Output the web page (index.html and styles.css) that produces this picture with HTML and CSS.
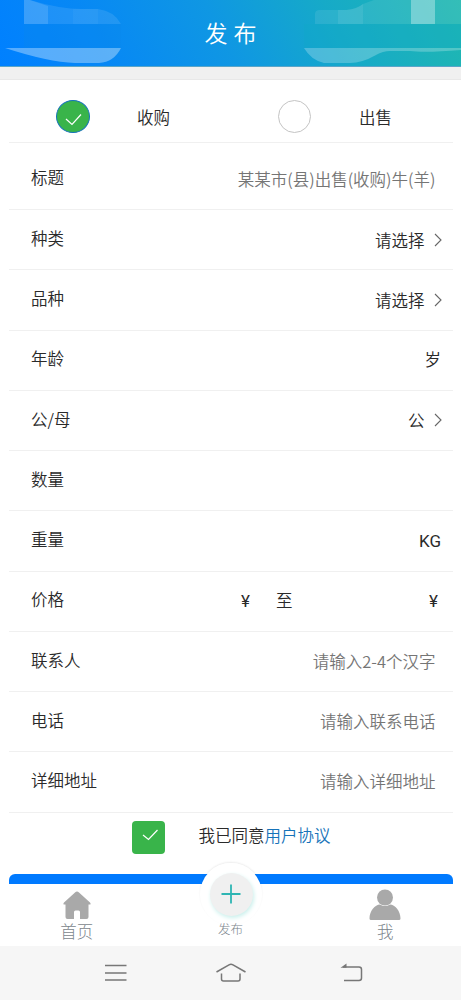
FILE: index.html
```
<!DOCTYPE html>
<html lang="zh-CN">
<head>
<meta charset="utf-8">
<title>发布</title>
<link rel="stylesheet" href="styles.css">
</head>
<body>
<div class="app">
  <header class="header">
    <svg class="header-art" viewBox="0 0 461 67" width="461" height="67" aria-hidden="true">
      <path d="M24 0H30Q60 9 82 9H98Q114 11 121 24H24Z" fill="#fff" opacity=".1"/>
      <path d="M24 0H30L48 6V24H24Z" fill="#fff" opacity=".13"/>
      <path d="M73 9H98V24H73Z" fill="#fff" opacity=".04"/>
      <path d="M5 48H121Q114 62 99 63H75Q48 62 5 48Z" fill="#fff" opacity=".34"/>
      <path d="M24 24H121V48H24Z" fill="#0a88ea" opacity=".3"/>
      <path d="M315 24V14Q315 10 320 10H346Q357 9 363 4L374 0H461V24Z" fill="#fff" opacity=".09"/>
      <path d="M338 10H346Q357 9 363 4V24H338Z" fill="#fff" opacity=".08"/>
      <path d="M411 0H435V24H411Z" fill="#fff" opacity=".33"/>
      <path d="M304 24H461V48H304Z" fill="#10a8c8" opacity=".3"/>
      <path d="M304 48H461V50Q425 53 410 51H390Q383 51 376 55Q362 63 350 63H324Q311 60 304 48Z" fill="#fff" opacity=".24"/>
    </svg>
    <h1 class="title">发<span class="title-end">布</span></h1>
  </header>
  <div class="band"></div>
  <main class="form">
    <div class="types">
      <label class="type"><span class="radio radio-on"><svg viewBox="0 0 34 34" width="34" height="34"><path d="M10 19L16 24.500L25 14.500" class="tick"/></svg></span><span>收购</span></label>
      <label class="type"><span class="radio"></span><span>出售</span></label>
    </div>
    <div class="row row-first"><span class="label">标题</span><span class="value hint">某某市(县)出售(收购)牛(羊)</span></div>
    <div class="row"><span class="label">种类</span><span class="value pick">请选择<svg class="chevron" viewBox="0 0 8 14" width="8" height="14"><path d="M1 1L7 7L1 13"/></svg></span></div>
    <div class="row"><span class="label">品种</span><span class="value pick">请选择<svg class="chevron" viewBox="0 0 8 14" width="8" height="14"><path d="M1 1L7 7L1 13"/></svg></span></div>
    <div class="row"><span class="label">年龄</span><span class="value age">岁</span></div>
    <div class="row"><span class="label">公/母</span><span class="value pick">公<svg class="chevron" viewBox="0 0 8 14" width="8" height="14"><path d="M1 1L7 7L1 13"/></svg></span></div>
    <div class="row"><span class="label">数量</span></div>
    <div class="row"><span class="label">重量</span><span class="value unit">KG</span></div>
    <div class="row"><span class="label">价格</span><span class="value price"><span class="yen">¥</span><span class="to">至</span><span class="yen">¥</span></span></div>
    <div class="row"><span class="label">联系人</span><span class="value hint">请输入2-4个汉字</span></div>
    <div class="row"><span class="label">电话</span><span class="value hint">请输入联系电话</span></div>
    <div class="row"><span class="label">详细地址</span><span class="value hint">请输入详细地址</span></div>
    <div class="agree">
      <span class="checkbox"><svg viewBox="0 0 34 34" width="34" height="34"><path d="M11 14L16.500 18.500L25.500 9" class="tick"/></svg></span>
      <span>我已同意<a class="link">用户协议</a></span>
    </div>
    <div class="submit"></div>
  </main>
  <nav class="tabs">
    <div class="tab">
      <svg class="tab-icon" viewBox="0 0 32 32" width="32" height="32"><path d="M16 2.500Q17 2.500 18 3.500L29 13.500Q30.500 15.500 28.500 15.500H27.500V28Q27.500 30 25.500 30H19V23Q19 21.500 17.500 21.500H14.500Q13 21.500 13 23V30H6.500Q4.500 30 4.500 28V15.500H3.500Q1.500 15.500 3 13.500L14 3.500Q15 2.500 16 2.500Z"/></svg>
      <span>首页</span>
    </div>
    <div class="tab tab-main">
      <span class="halo"><span class="plus"><svg viewBox="0 0 20 20" width="20" height="20"><path d="M10 .5V19.500M.5 10H19.500"/></svg></span></span>
      <span class="publish">发布</span>
    </div>
    <div class="tab">
      <svg class="tab-icon tab-icon-me" viewBox="0 0 32 32" width="32" height="32"><circle cx="16" cy="8.500" r="8"/><path d="M.5 29.500C.5 22 6 15.500 11 15.500Q16 18.500 21 15.500C26 15.500 31.500 22 31.500 29.500Q31.500 31 30 31H2Q.5 31 .5 29.500Z"/></svg>
      <span class="me">我</span>
    </div>
  </nav>
  <footer class="system">
    <svg viewBox="0 0 22 18" width="22" height="18"><path d="M0 2.500H21.500M0 10H21.500M0 17H21.500"/></svg>
    <svg viewBox="0 0 30 20" width="30" height="20"><path d="M.5 9L13 1.800Q15 .6 17 1.800L29.500 9M5.500 10.500V16Q5.500 18 7.500 18H22Q24 18 24 16V10.500"/></svg>
    <svg viewBox="0 0 23 19" width="23" height="19"><path d="M3 4H19Q21.500 4 21.500 6.500V15Q21.500 17.500 19 17.500H4"/><path class="arrow" d="M.5 4.700L6.500 .5V4.700Z"/></svg>
  </footer>
</div>
</body>
</html>
```

FILE: styles.css
```
* { box-sizing: border-box; }

body {
  margin: 0;
  background: #fff;
  color: #2a2a2a;
  font: 350 16.5px/24px "Noto Sans CJK SC", sans-serif;
}

.app {
  display: flex;
  flex-direction: column;
  width: 461px;
  height: 1000px;
  overflow: hidden;
}

svg { display: block; flex: none; }

.header {
  position: relative;
  flex: none;
  height: 67px;
  display: flex;
  justify-content: center;
  background: linear-gradient(62deg, #0080ff 0%, #0788f5 22%, #0f97e3 48%, #16aac8 72%, #20b8b0 100%);
  border-bottom: 1px solid #5aa5c8;
}

.header-art { position: absolute; top: 0; left: 0; }

.title {
  position: relative;
  margin: 0;
  padding-top: 15px;
  color: #fff;
  font-size: 23px;
  font-weight: 350;
  line-height: 34px;
}

.title-end { margin-left: 6px; }

.band {
  flex: none;
  height: 13px;
  background: #f0f0f0;
  border-bottom: 1px solid #e8e8e8;
}

.form {
  flex: none;
  height: 804px;
  padding: 0 8px 0 9px;
}

.types {
  display: flex;
  height: 63px;
  padding: 20px 0 0 47px;
  border-bottom: 1.5px solid #f0f0f0;
}

.type {
  display: flex;
  width: 222px;
  gap: 47px;
  line-height: 34px;
}

.type:last-child { width: 150px; gap: 48px; }

.radio {
  width: 33px;
  height: 33px;
  border: 1px solid #c4c4c4;
  border-radius: 50%;
}

.radio-on {
  width: 34px;
  height: 33px;
  background: #39b44a;
  border: 1.5px solid #1673b9;
}

.radio-on svg { margin: -1.5px -1px; }

.tick { fill: none; stroke: #fff; stroke-width: 1.2; }

.row {
  display: flex;
  justify-content: space-between;
  height: 60.25px;
  padding: 16px 13px 0 22px;
  border-bottom: 1.5px solid #f0f0f0;
}

.label { margin-top: -.25px; }
.row-first { height: 67px; padding-top: 22.5px; }

.value { padding-top: 1px; }
.hint { padding-right: 4.5px; color: #757575; }
.age { padding-top: .5px; margin-right: -1px; }
.pick { display: flex; gap: 9.5px; padding-top: 1.5px; margin-right: -2px; }
.chevron { margin-top: 5px; fill: none; stroke: #666; stroke-width: 1.1; }
.unit { padding-top: 2px; margin-right: -1px; font-family: Roboto, sans-serif; font-size: 17px; font-weight: 400; }
.price { display: flex; width: 200px; padding-top: 0; margin-right: -1px; }
.yen { width: 12px; font-family: Roboto, sans-serif; font-size: 17px; font-weight: 400; padding-top: 1px; }
.to { flex: 1; padding-left: 23px; }

.agree {
  display: flex;
  gap: 33.5px;
  padding: 8px 0 0 123px;
  height: 61px;
  line-height: 29px;
}

.checkbox {
  width: 33px;
  height: 33px;
  background: #39b44a;
  border-radius: 4px;
}

.link { color: #1673b9; }

.submit {
  height: 44px;
  border-radius: 6px;
  background: #007aff;
}

.tabs {
  position: relative;
  flex: none;
  display: flex;
  justify-content: space-between;
  height: 62px;
  background: #fff;
}

.tab {
  display: flex;
  flex-direction: column;
  align-items: center;
  width: 154px;
  padding-top: 5px;
  color: #7b858c;
  font-weight: 300;
  line-height: 20px;
}

.tab-icon { fill: #a9a9a9; }
.tab-icon-me, .me { margin-left: 2px; }

.tab-main { margin-top: -21px; padding: 0; }

.halo {
  display: flex;
  justify-content: center;
  width: 62px;
  height: 62px;
  padding-top: 10px;
  border-radius: 50%;
  background: linear-gradient(#fff, #fff);
  box-shadow: 0 -1px 2px rgba(0, 0, 0, .08);
}

.plus {
  display: flex;
  align-items: center;
  justify-content: center;
  width: 43px;
  height: 43px;
  margin-left: 1px;
  border-radius: 50%;
  background: #f0f0f0;
  box-shadow: 1px 2px 4px #c9f0ec;
}

.plus svg { margin: -2px 0 0 -1px; fill: none; stroke: #2eb5b3; stroke-width: 1.8; }

.publish { margin-top: -6px; font-size: 12.5px; }

.system {
  flex: none;
  display: flex;
  height: 54px;
  padding: 17px 98px 0 105px;
  justify-content: space-between;
  background: #f6f6f6;
}

.system svg:nth-child(2) { margin-left: -5px; }
.system path { fill: none; stroke: #777; stroke-width: 1.5; }
.system .arrow { fill: #777; stroke: none; }
```
